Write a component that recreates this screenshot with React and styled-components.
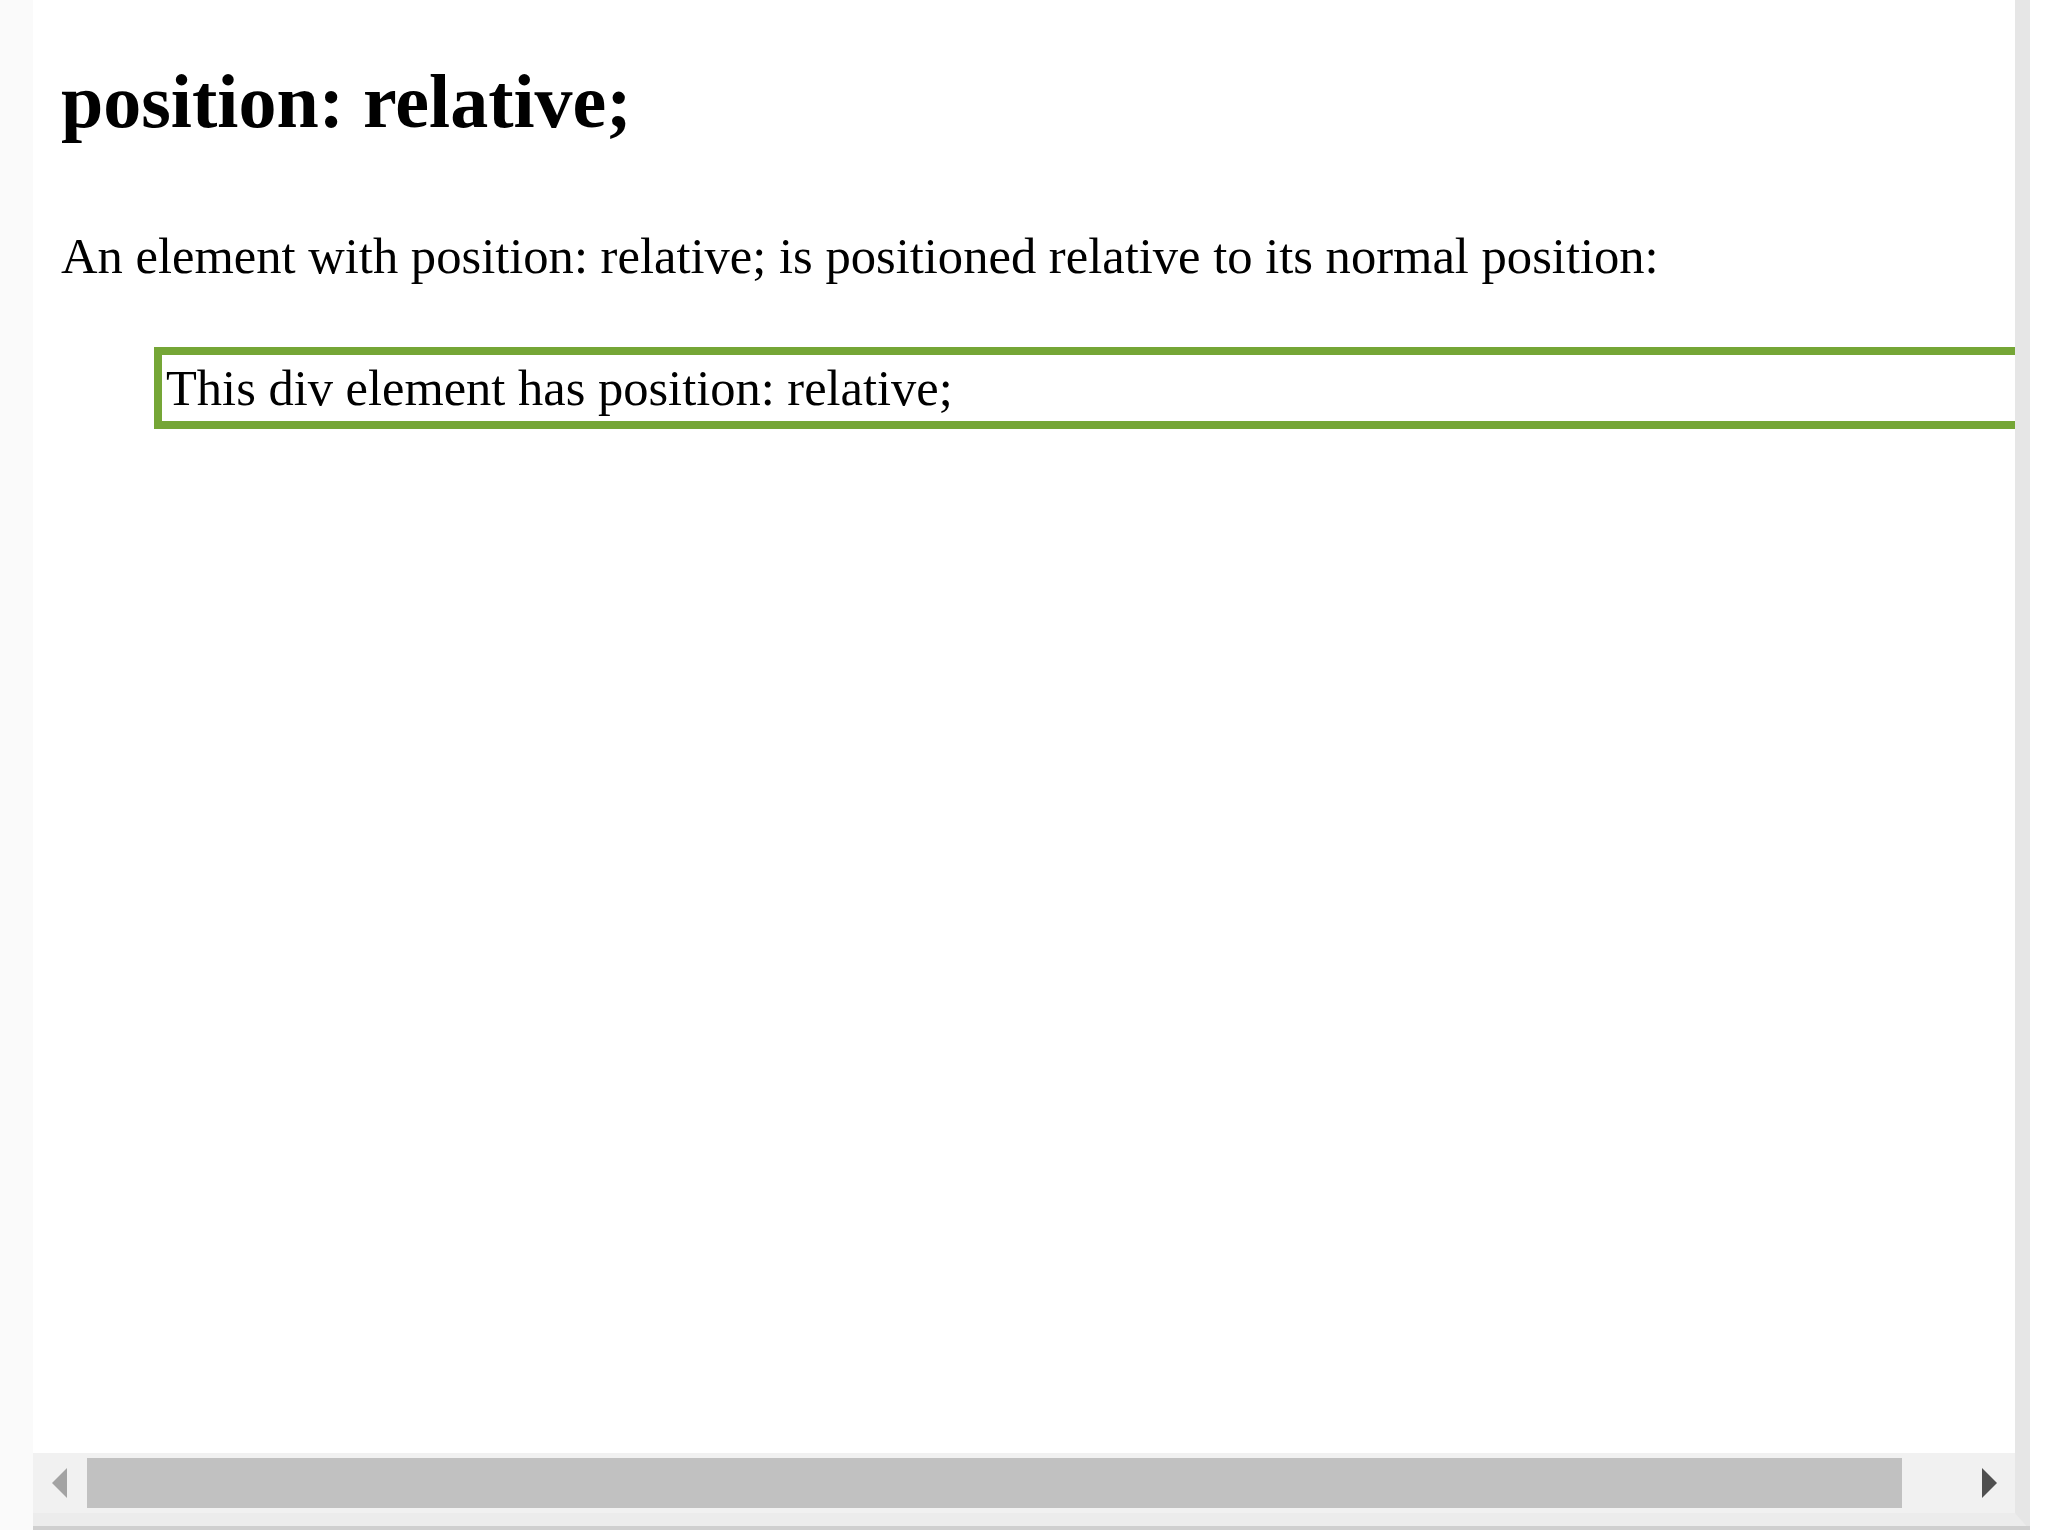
import React from 'react';
import styled, { createGlobalStyle } from 'styled-components';

const GlobalStyle = createGlobalStyle`
    html, body {
        margin: 0;
        padding: 0;
        background: #ffffff;
    }
    body {
        font-family: "Liberation Serif", "Times New Roman", serif;
        color: #000;
    }
`;

// #region Styles

const Page = styled.div`
    width: 2048px;
    height: 1536px;
    overflow: hidden;
    background: #ffffff;
    display: flex;
    align-items: flex-start;
`;

const Gutter = styled.div`
    width: 33px;
    height: 1530px;
    flex-shrink: 0;
    background: #fafafa;
`;

const Frame = styled.div`
    width: 1982px;
    height: 1513px;
    flex-shrink: 0;
    display: flex;
    flex-direction: column;
    border-right: 15px solid #e6e6e6;
    border-bottom: 17px solid #ececec;
    position: relative;
`;

const BottomEdge = styled.div`
    position: absolute;
    left: 0;
    right: -15px;
    bottom: -17px;
    height: 4px;
    background: #cfcfcf;
`;

const Viewport = styled.div`
    flex: 1;
    overflow: hidden;
    background: #ffffff;
    padding: 56px 28px 0 28px;
`;

const Heading = styled.h2`
    margin: 0;
    font-size: 76px;
    line-height: 90px;
    font-weight: 700;
    white-space: nowrap;
`;

const Text = styled.p`
    margin: 80px 0 0 0;
    font-size: 50.6px;
    line-height: 60px;
    white-space: nowrap;
`;

const RelativeBox = styled.div`
    margin: 61px -93px 0 93px;
    border: 8px solid #75a636;
    padding-left: 4px;
    font-size: 50.5px;
    line-height: 66px;
    white-space: nowrap;
`;

const ScrollBar = styled.div`
    height: 60px;
    flex-shrink: 0;
    display: flex;
    align-items: stretch;
    background: #f1f1f1;
`;

const ArrowButton = styled.div`
    width: 52px;
    flex-shrink: 0;
    display: flex;
    align-items: center;
    justify-content: center;
    margin-left: ${(p) => (p.$right ? 'auto' : '0')};
`;

const Thumb = styled.div`
    width: 1815px;
    margin: 5px 0 5px 2px;
    background: #c1c1c1;
`;

// #endregion

function Arrow({ right, color }) {
    return (
        <svg width="15" height="30" viewBox="0 0 15 30">
            {right ? (
                <polygon points="0,0 15,15 0,30" fill={color} />
            ) : (
                <polygon points="15,0 0,15 15,30" fill={color} />
            )}
        </svg>
    );
}

export default function App() {
    return (
        <>
            <GlobalStyle />
            <Page>
                <Gutter />
                <Frame>
                    <Viewport>
                        <Heading>position: relative;</Heading>
                        <Text>An element with position: relative; is positioned relative to its normal position:</Text>
                        <RelativeBox>This div element has position: relative;</RelativeBox>
                    </Viewport>
                    <ScrollBar>
                        <ArrowButton>
                            <Arrow color="#a3a3a3" />
                        </ArrowButton>
                        <Thumb />
                        <ArrowButton $right>
                            <Arrow right color="#505050" />
                        </ArrowButton>
                    </ScrollBar>
                    <BottomEdge />
                </Frame>
            </Page>
        </>
    );
}
